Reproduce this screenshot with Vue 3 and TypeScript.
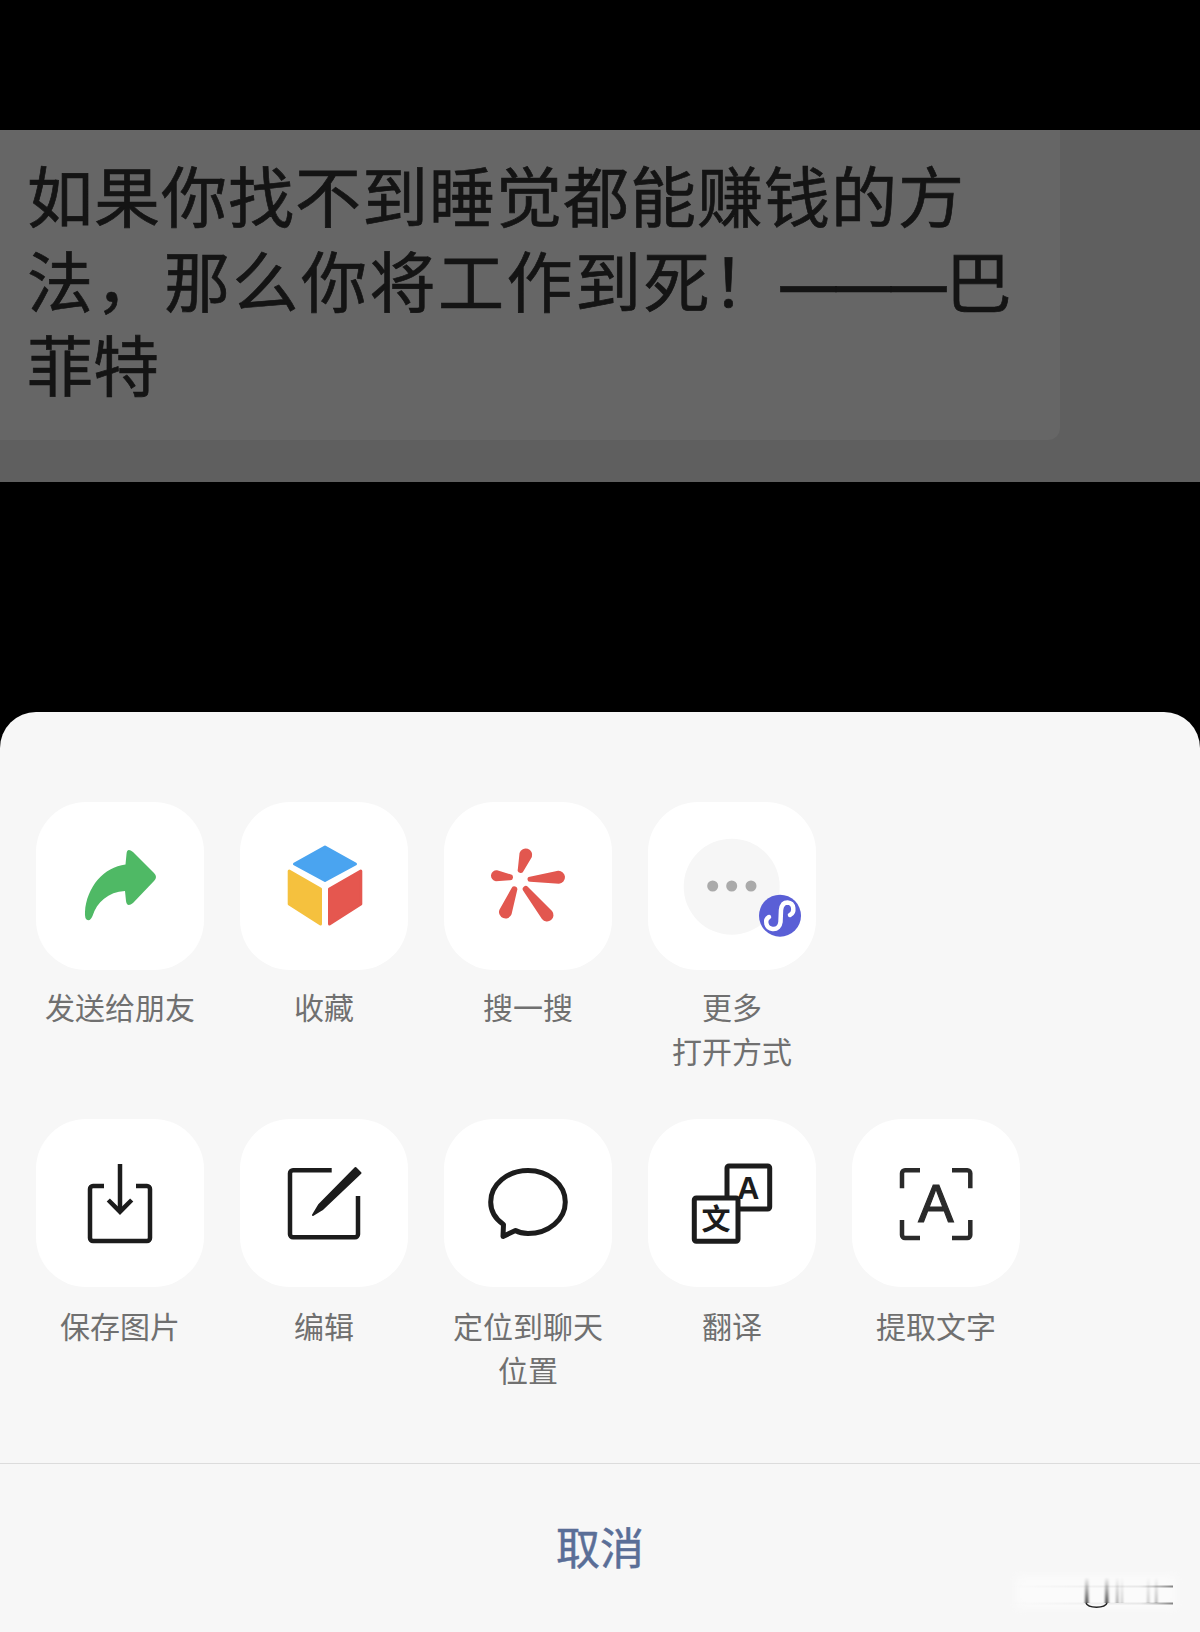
<script setup lang="ts">
function petal(x1: number, y1: number, r1: number, x2: number, y2: number, r2: number): string {
  const dx = x2 - x1
  const dy = y2 - y1
  const len = Math.hypot(dx, dy)
  const nx = -dy / len
  const ny = dx / len
  return [
    `M${x1 + nx * r1} ${y1 + ny * r1}`,
    `A${r1} ${r1} 0 0 1 ${x1 - nx * r1} ${y1 - ny * r1}`,
    `L${x2 - nx * r2} ${y2 - ny * r2}`,
    `A${r2} ${r2} 0 0 1 ${x2 + nx * r2} ${y2 + ny * r2}`,
    'Z',
  ].join(' ')
}

const petals: string[] = [
  petal(81.7, 53, 6.5, 76.7, 68, 3),
  petal(114.5, 75.3, 6.5, 86, 77.3, 2.5),
  petal(52.5, 73.7, 5.5, 66, 75.3, 3),
  petal(61.5, 110, 6.5, 70.3, 87.3, 3),
  petal(103, 113, 6.5, 81.7, 87, 3),
]
</script>

<template>
  <div class="screen">
    <section class="band">
      <div class="bubble">
        <p class="line first">如果你找不到睡觉都能赚钱的方</p>
        <p class="line second">法，那么你将工作到死！<span class="dash">———</span>巴</p>
        <p class="line">菲特</p>
      </div>
    </section>

    <section class="sheet">
      <div class="grid">
        <div class="item">
          <div class="tile">
            <svg viewBox="0 0 168 168">
              <path
                fill="#4fb965"
                d="M90.5 52Q91 45 97 50L118 71Q122 75 118 79L97 101Q91 106 90 99L89 89C72 90 61 100 56.500 114Q54.500 119 51.500 118Q48.500 117 49 110C50.500 85 68 65 89.500 62.500Z"
              />
            </svg>
          </div>
          <div class="label">发送给朋友</div>
        </div>

        <div class="item">
          <div class="tile">
            <svg viewBox="0 0 168 168" stroke-linejoin="round" stroke-width="3">
              <path fill="#4aa4f0" stroke="#4aa4f0" d="M85 45 115.500 62 85 78.500 54.500 62Z" />
              <path fill="#f5c13e" stroke="#f5c13e" d="M49.200 69 80.500 87V122L49.200 102Z" />
              <path fill="#e5574f" stroke="#e5574f" d="M120.800 69 89.500 87V122L120.800 102Z" />
            </svg>
          </div>
          <div class="label">收藏</div>
        </div>

        <div class="item">
          <div class="tile">
            <svg viewBox="0 0 168 168">
              <path v-for="(d, i) in petals" :key="i" :d="d" fill="#e2574f" />
            </svg>
          </div>
          <div class="label">搜一搜</div>
        </div>

        <div class="item">
          <div class="tile">
            <svg viewBox="0 0 168 168">
              <circle cx="83.700" cy="84.700" r="48" fill="#f6f6f6" />
              <circle cx="64.700" cy="84" r="5.500" fill="#aaaaaa" />
              <circle cx="83.700" cy="84" r="5.500" fill="#aaaaaa" />
              <circle cx="103" cy="84" r="5.500" fill="#aaaaaa" />
              <circle cx="132" cy="113.700" r="21" fill="#5a5fd6" />
              <path
                fill="none"
                stroke="#ffffff"
                stroke-width="4.500"
                stroke-linecap="round"
                d="M121 115C116 118 118 126.500 124.500 127C129.500 127.500 132 124 132.500 120L133 108C133.500 104 135 100.500 139.500 100.500C146.500 101 147 110.500 142 113"
              />
            </svg>
          </div>
          <div class="label">更多<br />打开方式</div>
        </div>

        <div class="spare"></div>

        <div class="item">
          <div class="tile">
            <svg viewBox="0 0 168 168" fill="none" stroke="#1c1c1c" stroke-width="4.500">
              <path d="M68 67H57a3 3 0 0 0-3 3V119a3 3 0 0 0 3 3H111a3 3 0 0 0 3-3V70a3 3 0 0 0-3-3H100" />
              <path d="M84 45V92" />
              <path d="M72.300 81 84 92.700 95.700 81" />
            </svg>
          </div>
          <div class="label">保存图片</div>
        </div>

        <div class="item">
          <div class="tile">
            <svg viewBox="0 0 168 168" fill="none" stroke="#1c1c1c" stroke-width="4.500">
              <path d="M91.700 51.300H53a3 3 0 0 0-3 3V115.300a3 3 0 0 0 3 3H115a3 3 0 0 0 3-3V77" />
              <path
                fill="#1c1c1c"
                stroke-width="2"
                stroke-linejoin="round"
                d="M73 96 79 86 115.500 49 120.500 54 82 90.500Z"
              />
            </svg>
          </div>
          <div class="label">编辑</div>
        </div>

        <div class="item">
          <div class="tile">
            <svg viewBox="0 0 168 168">
              <path
                fill="none"
                stroke="#1c1c1c"
                stroke-width="5"
                stroke-linejoin="round"
                d="M71.500 111.500C75 113.500 79 114.500 84 114.500C104.500 114.500 121.300 100.500 121.300 83C121.300 65.500 104.500 51.500 84 51.500C63.500 51.500 46.700 65.500 46.700 83C46.700 92 51.500 100 59.500 105.500L59 117.500Z"
              />
            </svg>
          </div>
          <div class="label">定位到聊天位置</div>
        </div>

        <div class="item">
          <div class="tile">
            <svg viewBox="0 0 168 168">
              <rect x="79" y="47" width="42.700" height="43" rx="2" fill="#ffffff" stroke="#1c1c1c" stroke-width="5" />
              <text x="100.300" y="80" class="glyph-a" text-anchor="middle">A</text>
              <rect x="46.300" y="79" width="43.700" height="43.300" rx="2" fill="#ffffff" stroke="#1c1c1c" stroke-width="5" />
              <text x="68" y="111" class="glyph-wen" text-anchor="middle">文</text>
            </svg>
          </div>
          <div class="label">翻译</div>
        </div>

        <div class="item">
          <div class="tile">
            <svg viewBox="0 0 168 168" fill="none" stroke="#2a2a2a" stroke-width="4.500">
              <path d="M68 51.300H53a3 3 0 0 0-3 3V69.300" />
              <path d="M100 51.300H115.300a3 3 0 0 1 3 3V69.300" />
              <path d="M50 101V116a3 3 0 0 0 3 3H68" />
              <path d="M118.300 101V116a3 3 0 0 1-3 3H100" />
              <text x="84" y="103" class="glyph-big" text-anchor="middle">A</text>
            </svg>
          </div>
          <div class="label">提取文字</div>
        </div>
      </div>

      <footer class="footer"><span class="cancel">取消</span></footer>

      <svg class="watermark" viewBox="0 0 190 60" aria-hidden="true">
        <defs>
          <filter id="patch" x="-10%" y="-30%" width="120%" height="160%">
            <feGaussianBlur stdDeviation="5" />
          </filter>
          <filter id="soft" x="-20%" y="-40%" width="140%" height="180%">
            <feGaussianBlur stdDeviation="1.200 0.600" />
          </filter>
          <linearGradient id="fadeDown" x1="0" y1="0" x2="0" y2="1">
            <stop offset="0" stop-color="#000000" stop-opacity="0" />
            <stop offset="1" stop-color="#000000" stop-opacity="0.700" />
          </linearGradient>
          <linearGradient id="fadeRight" x1="0" y1="0" x2="1" y2="0">
            <stop offset="0" stop-color="#cccccc" stop-opacity="0" />
            <stop offset="0.800" stop-color="#bbbbbb" stop-opacity="0.300" />
            <stop offset="1" stop-color="#666666" stop-opacity="0.800" />
          </linearGradient>
        </defs>
        <rect x="6" y="6" width="160" height="32" fill="#fbfbfb" filter="url(#patch)" />
        <rect x="0" y="15.500" width="163" height="2" fill="url(#fadeRight)" />
        <rect x="0" y="32.500" width="163" height="2" fill="url(#fadeRight)" />
        <g filter="url(#soft)">
          <rect x="75" y="7" width="3.500" height="26" fill="url(#fadeDown)" />
          <rect x="95" y="7" width="3.500" height="26" fill="url(#fadeDown)" />
          <rect x="106" y="7" width="2.500" height="26" fill="url(#fadeDown)" opacity="0.500" />
          <rect x="111" y="7" width="2" height="26" fill="url(#fadeDown)" opacity="0.300" />
          <rect x="137" y="7" width="2.500" height="26" fill="url(#fadeDown)" opacity="0.300" />
          <rect x="145" y="7" width="2.500" height="26" fill="url(#fadeDown)" opacity="0.400" />
        </g>
        <path d="M76 33C78 38.500 95 38.500 97 33" fill="none" stroke="#222222" stroke-width="1.500" />
      </svg>
    </section>
  </div>
</template>

<style scoped>
.screen {
  height: 1632px;
  display: flex;
  flex-direction: column;
  justify-content: space-between;
  background: #000000;
  overflow: hidden;
  font-family: "Noto Sans CJK SC", "Noto Sans", sans-serif;
}

.band {
  margin-top: 130px;
  height: 352px;
  background: #5f5f5f;
}

.bubble {
  width: 1060px;
  height: 310px;
  box-sizing: border-box;
  padding: 21px 0 0 27px;
  background: #666666;
  border-bottom-right-radius: 12px;
  color: #141414;
}

.line {
  margin: 0;
  font-size: 66px;
  font-weight: 400;
  -webkit-text-stroke: 0.7px #141414;
  line-height: 84.5px;
  white-space: nowrap;
}

.first {
  letter-spacing: 1px;
}

.second {
  letter-spacing: 2.5px;
}

.dash {
  font-family: "Liberation Sans", sans-serif;
  font-size: 56px;
  font-weight: 700;
  line-height: 0;
  letter-spacing: -1px;
  vertical-align: 3px;
}

.sheet {
  position: relative;
  height: 920px;
  box-sizing: border-box;
  padding-top: 90px;
  background: #f7f7f7;
  border-radius: 36px 36px 0 0;
}

.grid {
  display: grid;
  grid-template-columns: repeat(5, 168px);
  column-gap: 36px;
  row-gap: 45px;
  padding: 0 0 72px 36px;
}

.item {
  height: 272px;
}

.spare {
  height: 272px;
}

.tile {
  width: 168px;
  height: 168px;
  background: #ffffff;
  border-radius: 50px;
}

.tile svg {
  display: block;
  width: 168px;
  height: 168px;
}

.label {
  margin-top: 16px;
  font-size: 30px;
  line-height: 44px;
  text-align: center;
  color: #707070;
}

.item:nth-child(-n + 4) .label {
  margin-top: 14px;
}

.glyph-a {
  font-family: "Liberation Sans", sans-serif;
  font-weight: 700;
  font-size: 31px;
  fill: #1c1c1c;
}

.glyph-wen {
  font-family: "Noto Sans CJK SC", sans-serif;
  font-weight: 700;
  font-size: 29px;
  fill: #1c1c1c;
}

.glyph-big {
  font-family: "Liberation Sans", sans-serif;
  font-size: 53px;
  fill: #2a2a2a;
  stroke: #2a2a2a;
  stroke-width: 1.2px;
}

.footer {
  height: 168px;
  box-sizing: border-box;
  padding-bottom: 4px;
  border-top: 1px solid #dcdcdc;
  display: flex;
  align-items: center;
  justify-content: center;
}

.cancel {
  font-size: 44px;
  font-weight: 400;
  -webkit-text-stroke: 0.5px #5a6e97;
  color: #5a6e97;
}

.watermark {
  position: absolute;
  right: 0;
  bottom: 2px;
  width: 190px;
  height: 60px;
}
</style>
